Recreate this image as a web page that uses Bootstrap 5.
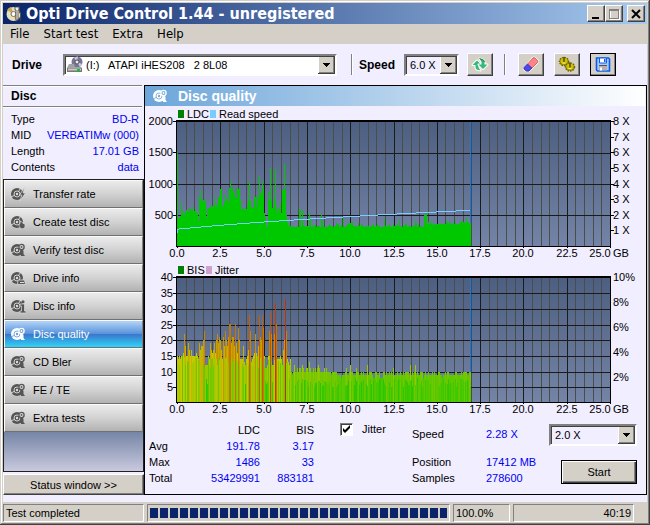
<!DOCTYPE html>
<html lang="en">
<head>
<meta charset="utf-8">
<meta name="viewport" content="width=device-width, initial-scale=1">
<title>Opti Drive Control 1.44 - unregistered</title>
<link href="https://cdn.jsdelivr.net/npm/bootstrap@5.3.0/dist/css/bootstrap.min.css" rel="stylesheet">
<style>
:root{--face:#d4d0c8;--pane:#f0eeff;--blue:#0000f0}
body{font:11px/16px "Liberation Sans",Arial,sans-serif;color:#000;background:var(--face)}
.app{min-height:100vh;padding:3px;background:var(--face);box-shadow:inset -1px -1px #404040,inset 1px 1px #d4d0c8,inset -2px -2px #808080,inset 2px 2px #fff}
.tahoma{font-family:"DejaVu Sans Condensed","Noto Sans",sans-serif}
.titlebar{height:21px;padding:0 2px 0 3px;background:linear-gradient(90deg,#0a246a,#a6caf0);color:#fff}
.titlebar h1{font-size:16px;line-height:21px;font-weight:700;margin:0 auto 0 4px;white-space:nowrap}
.bevel{background:var(--face);border:1px solid;border-color:#fff #404040 #404040 #fff;box-shadow:inset -1px -1px #808080;color:#000;padding:0;border-radius:0}
.capbtn{width:18px;height:17px;display:flex}
.capbtn svg{margin:auto}
.menu{height:20px;padding-left:7px;gap:14px;font-size:13px;line-height:19px}
.menu a{color:#000;text-decoration:none}
.client{background:var(--pane)}
.tools{height:41px;padding:0 31px 0 9px}
.tools label{font-weight:700;font-size:12px}
.drive-label{width:51px}
.pick{appearance:none;border:2px solid;border-color:#808080 #fff #fff #808080;box-shadow:inset 1px 1px #404040;height:22px;padding:0 20px 0 4px;border-radius:0;font-size:11px;color:#000;
background:#fff url("data:image/svg+xml,%3Csvg xmlns='http://www.w3.org/2000/svg' width='17' height='18' shape-rendering='crispEdges'%3E%3Cpath fill='%23404040' d='M0 0h17v18H0z'/%3E%3Cpath fill='%23fff' d='M0 0h16v17H0z'/%3E%3Cpath fill='%23808080' d='M1 1h15v16H1z'/%3E%3Cpath fill='%23d4d0c8' d='M1 1h14v15H1z'/%3E%3Cpath d='M5 7h7v1H5zM6 8h5v1H6zM7 9h3v1H7zM8 10h1v1H8z'/%3E%3C/svg%3E") no-repeat right 0 top 0}
.pick.tinted{background-color:var(--pane)}
.pick.drive{padding-left:21px}
.drive-icon{position:absolute;left:3px;top:2px;pointer-events:none}
.vsep{width:2px;height:21px;background:linear-gradient(90deg,#808080 50%,#fff 50%)}
.sep-speed{margin:0 6px 0 14px}
.sep-tools{margin:0 12px 0 11px}
.speed-pick{width:55px;margin-left:9px}
.toolbtn{width:26px;height:23px;display:flex}
.toolbtn svg{margin:auto}
.toolbtn.active-tool{outline:1px solid #000;outline-offset:-1px}
.btn-gap{margin-left:10px}
.sidebar{width:141px;flex:none}
.disc-title{font-size:12px;line-height:20px;font-weight:700;margin:0 2px 0 0;padding-left:8px;border-top:1px solid #808080;border-bottom:1px solid #808080;box-shadow:0 1px #fff,inset 0 1px #fff}
.disc-facts{margin:0;padding:4px 5px 4px 8px;height:72px}
.disc-facts dt,.live dt{font-weight:400}
.disc-facts dd{color:var(--blue);margin:0}
.blue{color:var(--blue)}
.nav-stack{border:1px solid #202020;background:linear-gradient(#6f80a2,#c9c9de) bottom/100% 42px no-repeat}
.task{height:28px;display:flex;align-items:center;border:1px solid;border-color:#fafafa #808080 #707070 #fff;background:linear-gradient(#ebebeb,#d2d2d2 50%,#b2b2b2);color:#000;padding:0 0 0 5px;gap:7px;text-align:left;width:100%;--cut:#dcdcdc}
.task svg{color:#565656;flex:none}
.task.on{background:linear-gradient(#b4d4f6,#5a94dc 48%,#3a78cc 52%,#30d4f8);color:#fff;--cut:#6ca0e0}
.task.on svg{color:#fff}
.status-btn{height:21px;margin-top:2px}
.mainpane{border:1px solid #000;min-width:0;min-height:410px}
.pane-head{height:20px;margin-right:1px;padding-left:7px;background:linear-gradient(90deg,#6ca5da,#fff);color:#fff;--cut:#78acdc}
.pane-head h2{font-size:14px;line-height:20px;font-weight:700;margin:0 0 0 10px}
.chart{display:block;width:100%;height:auto;font-size:11px}
.figures{padding:3px 9px 0 4px}
.scores{margin-top:1px}
.scores th{font-weight:400}
.scores th,.scores td{padding:0}
.scores .rowhead{width:36px}
.scores .ldc{width:75px}
.scores .bis{width:54px}
.tick{appearance:none;width:13px;height:13px;margin:0;border:1px solid;border-color:#808080 #fff #fff #808080;box-shadow:inset 1px 1px #404040;background:#fff}
.tick:checked{background:#fff url("data:image/svg+xml,%3Csvg xmlns='http://www.w3.org/2000/svg' width='11' height='11'%3E%3Cpath d='M2 4v3l2 2 5-5V1L4 6z'/%3E%3C/svg%3E")}
.jit{margin-left:26px;gap:9px}
.live dt{width:74px}
.live dd{margin:0;width:56px;white-space:nowrap;color:var(--blue)}
.live-first{margin:5px 0 12px}
.go{width:88px;margin:3px 0 0 7px;gap:14px}
.startbtn{width:76px;height:24px;border-color:#000;box-shadow:inset 1px 1px #fff,inset -1px -1px #404040,inset -2px -2px #808080}
.foot-gap{height:7px}
.statusbar{height:20px;gap:3px;padding-right:13px}
.well{height:18px;line-height:16px;border:1px solid;border-color:#808080 #fff #fff #808080;padding:0 2px}
.well-msg{width:141px}
.well-pct{width:57px}
.well-time{width:121px}
.blocks{height:18px;padding:3px 2px;border:1px solid;border-color:#808080 #fff #fff #808080;background:none;border-radius:0;min-width:0}
.blocks .progress-bar{background:repeating-linear-gradient(90deg,#0a246a 0 8px,transparent 8px 10px)}
</style>
</head>
<body>
<svg class="d-none">
  <symbol id="disc" viewBox="0 0 16 16"><circle cx="7" cy="8" r="6" fill="currentColor"/><path d="M7 8L1 11M7 8L11 1.500" stroke="var(--cut)" stroke-width=".9"/><circle cx="7" cy="8" r="3" fill="currentColor" stroke="var(--cut)" stroke-width=".9"/><circle cx="7" cy="8" r="1.200" fill="var(--cut)"/></symbol>
  <symbol id="b-bolt" viewBox="0 0 16 16"><path fill="currentColor" stroke="var(--cut)" stroke-width=".8" d="M14.500 1.500L9.500 9h2.300L10 15l5.500-8h-2.300z"/></symbol>
  <symbol id="b-burn" viewBox="0 0 16 16"><path fill="currentColor" stroke="var(--cut)" stroke-width=".7" d="M10 7c2 1 3 1.500 3.500 3l.8-.8c1.500 2.500.7 5.500-1.800 5.500S8.300 12.500 9.500 10c.6-1 1-1.500.5-3z"/></symbol>
  <symbol id="b-lens" viewBox="0 0 16 16"><circle cx="11.500" cy="5" r="2.600" fill="var(--cut)" stroke="currentColor" stroke-width="1.300"/><circle cx="11.500" cy="5" r=".9" fill="currentColor"/><path fill="currentColor" d="M10 8.500h3.500V12l1.500 2h-4z"/></symbol>
  <symbol id="b-drive" viewBox="0 0 16 16"><path fill="currentColor" stroke="var(--cut)" stroke-width=".8" d="M8 10h6.500l1 4.500H7.500z"/><path stroke="var(--cut)" d="M10 12.500h4"/></symbol>
  <symbol id="b-info" viewBox="0 0 16 16"><path fill="currentColor" stroke="var(--cut)" stroke-width=".7" d="M10 6h4.500v7H16v2h-6v-2h1.500V8H10z"/><circle cx="13" cy="3.700" r="1.500" fill="currentColor"/></symbol>
</svg>
<div class="app d-flex flex-column">
  <header class="titlebar d-flex align-items-center">
    <svg width="16" height="17" viewBox="0 0 16 17"><circle cx="7.500" cy="9" r="7" fill="#e8dfc0"/><path d="M7.500 9L1 5a7 7 0 0 1 4-3zM7.500 9l6 4a7 7 0 0 1-4 3z" fill="#c6a94d"/><circle cx="7.500" cy="9" r="2.500" fill="#fff" stroke="#77705c"/><path d="M9 2h4v3h-1v10h-2V5H9zM13.500 1v7h1V16" fill="#eee" stroke="#444" stroke-width=".8"/></svg>
    <h1 class="tahoma">Opti Drive Control 1.44 - unregistered</h1>
    <button class="bevel capbtn" aria-label="Minimize"><svg width="12" height="12" shape-rendering="crispEdges"><path d="M2 9h7v2H2z"/></svg></button>
    <button class="bevel capbtn" aria-label="Maximize" disabled><svg width="12" height="12" shape-rendering="crispEdges"><path d="M2.500 2.500h9v9h-9z" fill="none" stroke="#fff"/><path d="M1.500 1.500h9v9h-9zM1 2.500h9" fill="none" stroke="#808080"/></svg></button>
    <button class="bevel capbtn ms-1" aria-label="Close"><svg width="12" height="12"><path d="M2 2l8 8M10 2l-8 8" stroke="#000" stroke-width="2"/></svg></button>
  </header>
  <nav class="menu tahoma d-flex"><a href="#">File</a><a href="#">Start test</a><a href="#">Extra</a><a href="#">Help</a></nav>
  <div class="client flex-grow-1">
    <div class="tools d-flex align-items-center">
      <label class="drive-label" for="drive">Drive</label>
      <div class="position-relative flex-grow-1">
        <select id="drive" class="pick drive w-100 d-block"><option>(I:) &nbsp; ATAPI iHES208 &nbsp; 2 8L08</option></select>
        <svg class="drive-icon" width="17" height="17" viewBox="0 0 17 17"><circle cx="11" cy="6" r="5.500" fill="#77739b"/><path d="M11 6L8 1.500l4-1zM11 6l5 2-2 3z" fill="#c9c5e4"/><circle cx="11" cy="6" r="2" fill="#eee" stroke="#555"/><path d="M3 8h5l1 3h6l1 1v4H1v-4z" fill="#a2a2a2"/><path d="M1 12h15v4H1z" fill="#777"/><path d="M2 12.500h13v2H2z" fill="#c8c8c8"/><path d="M11 13h3v2h-3z" fill="#0c3"/></svg>
      </div>
      <span class="vsep sep-speed"></span>
      <label for="spd">Speed</label>
      <select id="spd" class="pick tinted speed-pick"><option>6.0 X</option></select>
      <button class="bevel toolbtn ms-2" aria-label="Refresh"><svg width="18" height="16" viewBox="0 0 18 16"><g stroke="#fff" stroke-width="2" stroke-linejoin="round" fill="#35b878" paint-order="stroke"><path d="M6 3.500L10.500 8H7.500v2.500l2 3L5.500 12.500 4.500 10.500V8H1.500z"/><path d="M12 12L7.500 7.500h3V5L8.500 1.500 12.500 3 13.500 5v2.500h3z"/></g><path d="M8.500 1.500L12.500 3 13.500 5" fill="none" stroke="#1d7a50"/></svg></button>
      <span class="vsep sep-tools"></span>
      <button class="bevel toolbtn" aria-label="Erase"><svg width="18" height="17" viewBox="0 0 18 17"><path d="M2.500 12L11 2q1-1 2 0l2.500 2.500q1 1 0 2L7 15H4.500L2 13z" fill="#f88" stroke="#fff" stroke-width="2"/><path d="M2.500 11.500L11 2q1-1 2 0l2.500 2.500q1 1 0 2L7 15H4.500L2 13z" fill="#ff8585" stroke="#c24a4a" stroke-width=".8"/><path d="M5.500 8l4.500 4-3 3H4.500L2 13v-1.500z" fill="#4a4aee" stroke="#3434b4" stroke-width=".8"/></svg></button>
      <button class="bevel toolbtn btn-gap" aria-label="Options"><svg width="18" height="17" viewBox="0 0 18 17"><g fill="#a89a00" stroke="#6e6300" stroke-width="1.500" stroke-dasharray="1.500 1"><ellipse cx="6" cy="5.500" rx="4.500" ry="4"/><ellipse cx="12" cy="11" rx="4.500" ry="4"/></g><g fill="#cfc000"><ellipse cx="6" cy="5" rx="3.500" ry="3"/><ellipse cx="12" cy="10.500" rx="3.500" ry="3"/></g><path d="M6 1v5M12 6.500v5" stroke="#554c00" stroke-width="1.500"/><path d="M4.500 7h3M10.500 12.500h3" stroke="#f4ee9a"/></svg></button>
      <button class="bevel toolbtn active-tool btn-gap" aria-label="Save"><svg width="16" height="15" viewBox="0 0 16 15"><path d="M1.500 1h12l1 1v12h-12l-1-1z" fill="#a9c8f8" stroke="#0b5cf0" stroke-width="1.600"/><path d="M4.500 1h7v5h-7z" fill="#fff" stroke="#0b5cf0"/><path d="M9 2h1.500v3H9z" fill="#0b5cf0"/><path d="M4 9h8v4.500H4z" fill="#b0b0b0"/><path d="M4 8.500h8" stroke="#555"/><path d="M5 10.500h2v3H5z" fill="#fff"/></svg></button>
    </div>
    <div class="d-flex">
      <aside class="sidebar d-flex flex-column">
        <h2 class="disc-title">Disc</h2>
        <dl class="disc-facts">
          <div class="d-flex justify-content-between"><dt>Type</dt><dd>BD-R</dd></div>
          <div class="d-flex justify-content-between"><dt>MID</dt><dd>VERBATIMw (000)</dd></div>
          <div class="d-flex justify-content-between"><dt>Length</dt><dd>17.01 GB</dd></div>
          <div class="d-flex justify-content-between"><dt>Contents</dt><dd>data</dd></div>
        </dl>
        <div class="nav-stack flex-grow-1">
          <button class="task"><svg width="16" height="16"><use href="#disc"/><use href="#b-bolt"/></svg>Transfer rate</button>
          <button class="task"><svg width="16" height="16"><use href="#disc"/><use href="#b-burn"/></svg>Create test disc</button>
          <button class="task"><svg width="16" height="16"><use href="#disc"/><use href="#b-lens"/></svg>Verify test disc</button>
          <button class="task"><svg width="16" height="16"><use href="#disc"/><use href="#b-drive"/></svg>Drive info</button>
          <button class="task"><svg width="16" height="16"><use href="#disc"/><use href="#b-info"/></svg>Disc info</button>
          <button class="task on"><svg width="16" height="16"><use href="#disc"/><use href="#b-lens"/></svg>Disc quality</button>
          <button class="task"><svg width="16" height="16"><use href="#disc"/><use href="#b-lens"/></svg>CD Bler</button>
          <button class="task"><svg width="16" height="16"><use href="#disc"/><use href="#b-lens"/></svg>FE / TE</button>
          <button class="task"><svg width="16" height="16"><use href="#disc"/><use href="#b-lens"/></svg>Extra tests</button>
        </div>
        <button class="bevel status-btn">Status window &gt;&gt;</button>
      </aside>
      <main class="mainpane flex-grow-1">
        <div class="pane-head d-flex align-items-center"><svg width="16" height="16"><use href="#disc"/><use href="#b-lens"/></svg><h2>Disc quality</h2></div>
        <svg id="ldc" class="chart" viewBox="145 106 501 156" role="img" aria-label="LDC and read speed"></svg>
        <svg id="bis" class="chart" viewBox="145 262 501 156" role="img" aria-label="BIS and jitter"></svg>
        <div class="figures d-flex align-items-start">
          <table class="scores">
            <tr><th class="rowhead"></th><th class="ldc text-end">LDC</th><th class="bis text-end">BIS</th></tr>
            <tr><th>Avg</th><td class="blue text-end">191.78</td><td class="blue text-end">3.17</td></tr>
            <tr><th>Max</th><td class="blue text-end">1486</td><td class="blue text-end">33</td></tr>
            <tr><th>Total</th><td class="blue text-end">53429991</td><td class="blue text-end">883181</td></tr>
          </table>
          <div class="jit d-flex align-items-center"><input id="jitter" class="tick" type="checkbox" checked><label for="jitter">Jitter</label></div>
          <dl class="live mb-0 ms-auto">
            <div class="d-flex live-first"><dt>Speed</dt><dd>2.28 X</dd></div>
            <div class="d-flex"><dt>Position</dt><dd>17412 MB</dd></div>
            <div class="d-flex"><dt>Samples</dt><dd>278600</dd></div>
          </dl>
          <div class="go d-flex flex-column align-items-end">
            <select id="rate" class="pick tinted w-100" aria-label="Test speed"><option>2.0 X</option></select>
            <button class="bevel startbtn">Start</button>
          </div>
        </div>
      </main>
    </div>
    <div class="foot-gap"></div>
  </div>
  <footer class="statusbar d-flex align-items-end">
    <div class="well well-msg">Test completed</div>
    <div class="progress blocks flex-grow-1" role="progressbar" aria-label="Test progress" aria-valuenow="100" aria-valuemin="0" aria-valuemax="100"><div class="progress-bar w-100"></div></div>
    <div class="well well-pct">100.0%</div>
    <div class="well well-time text-end">40:19</div>
  </footer>
</div>
<script src="https://cdn.jsdelivr.net/npm/bootstrap@5.3.0/dist/js/bootstrap.bundle.min.js"></script>
<script>
const X0 = 177, GB = 17.32;
let seed = 7;
const rnd = () => (seed = (seed * 16807) % 2147483647) / 2147483647;
const rect = (x, y, w, h, f) => `<rect x="${x}" y="${y}" width="${w}" height="${h}" fill="${f}"/>`;
const text = (x, y, s, a) => `<text x="${x}" y="${y}" text-anchor="${a}">${s}</text>`;

function plot(id, top, bottom, lines, data, extra, labels) {
  let s = `<defs><linearGradient id="${id}bg" x1="0" y1="0" x2="0" y2="1"><stop stop-color="#4d5f80"/><stop offset="1" stop-color="#7384a6"/></linearGradient></defs><g shape-rendering="crispEdges">`;
  s += rect(X0, top, 433, bottom - top, `url(#${id}bg)`);
  for (let i = 1; i < 50; i++) s += rect(Math.round(X0 + i * GB / 2), top, 1, bottom - top, i % 5 ? '#4c4c4c' : '#1b1b1b');
  for (const y of lines) s += rect(X0, y, 433, 1, '#1b1b1b');
  s += rect(470, top, 1, bottom - top, '#1078e8') + data + extra;
  s += rect(X0 - 1, top - 1, 435, 2, '#000') + rect(X0 - 1, top - 1, 1, bottom - top + 2, '#000') + rect(610, top - 1, 1, bottom - top + 2, '#000') + rect(X0 - 1, bottom, 435, 1, '#000');
  for (let i = 0; i <= 10; i++) s += rect(Math.round(X0 + i * GB * 2.5), bottom, 1, 2, '#000');
  s += '</g>';
  for (let i = 0; i <= 10; i++) s += text(Math.round(X0 + i * 43.3) - (i == 10 ? 10 : 0), bottom + 11, (i * 2.5).toFixed(1), 'middle');
  s += text(613, bottom + 11, 'GB', 'start');
  document.getElementById(id).innerHTML = s + labels;
}

// LDC: column tops for the first 6.5 GB, thirds of a pixel below y=85
const head = [205,400,400,392,358,375,390,390,380,376,378,380,370,372,376,366,380,378,372,380,388,408,335,315,345,350,345,350,342,400,372,370,370,362,366,364,366,335,360,366,358,332,340,312,312,360,366,328,350,340,345,353,310,288,312,318,308,338,325,340,308,312,310,345,372,370,376,370,376,372,360,345,292,345,365,368,366,335,335,365,333,340,274,325,328,288,312,385,400,420,425,345,322,250,345,370,370,345,252,365,385,372,372,355,385,316,316,238,316,390,412,422];
const spikes = {122:372,123:374,125:376,132:384,133:400,144:388,145:405,166:400,175:410,207:402,222:406,238:408,247:390,248:390,249:380,278:408,289:400};
const ramp = [[0,434],[2,431],[13,428],[24,425],[35,422],[47,419],[60,416],[73,413],[87,410],[102,407],[117,404],[133,401],[149,398],[166,395],[183,392],[201,389],[220,386],[239,382],[259,379],[279,376],[293,376]];
let ldc = '';
for (let i = 0; i < 294; i++) {
  const base = i < 250 ? 422 : i < 283 ? 414 : 409;
  let v = i < head.length ? head[i] : base + Math.round(rnd() * 5) - (rnd() > .85 ? 8 : 0);
  if (i >= head.length && spikes[i]) v = spikes[i];
  const y = Math.round(85 + v / 3);
  ldc += rect(X0 + i, y, 1, 246 - y, '#00c800');
}
let speed = rect(X0, 229, 1, 4, '#78ccff');
for (let k = 0; k < ramp.length - 1; k++) speed += rect(X0 + ramp[k][0], Math.round(84.500 + ramp[k][1] / 3), ramp[k + 1][0] - ramp[k][0], 1, '#78ccff');
let l1 = '';
[2000,1500,1000,500].forEach((n, i) => { const y = Math.round(121 + i * 31.3); l1 += text(173, y + 4, n, 'end') + rect(173, y, 4, 1, '#000'); });
for (let n = 1; n <= 8; n++) { const y = Math.round(246 - n * 15.6); l1 += text(613, y + 4, n + ' X', 'start') + rect(610, y, 4, 1, '#000'); }
l1 += rect(178, 110, 6, 8, '#008000') + text(187, 118, 'LDC', 'start') + rect(210, 110, 6, 8, '#78ccff') + text(219, 118, 'Read speed', 'start');
plot('ldc', 121, 246, [153, 184, 215], ldc, speed, l1);

// BIS: peak value of each column for the first 6.7 GB
const peaks = [15,14,15,14,15,15,16,22,18,15,15,19,17,15,17,15,15,15,15,16,15,14,19,17,18,18,20,23,12,12,12,15,14,19,17,16,17,19,16,20,22,19,21,20,17,14,21,18,23,20,18,21,25,25,19,21,21,18,25,19,16,24,20,14,14,14,18,13,12,14,15,17,28,23,13,14,15,16,22,16,15,18,28,21,20,28,24,15,11,11,12,15,23,29,22,12,12,22,32,25,14,14,14,15,14,12,17,20,33,23,14,13,12,14,10,9,10,12,10,10];
const shade = v => v <= 15 ? [Math.min(200, Math.max(0, (v - 4) * 19)), 200] : [200, Math.max(40, 200 - (v - 15) * 8.5)];
const tint = v => { const [r, g] = shade(v); return `rgb(${Math.round(r)},${Math.round(g)},0)`; };
const extra = {123:11,125:12,132:13,138:11,141:12,142:11,169:11,173:12,179:11,190:12,206:10,216:11,233:12,238:12,257:10,270:10,278:10,289:10};
let bis = '';
for (let i = 0; i < 294; i++) {
  let v = i < peaks.length ? peaks[i] : extra[i] || Math.round((i < 150 ? 9.6 : 8.4) + rnd() * 1.8);
  const h = Math.round(v * 3.14);
  bis += rect(X0 + i, 403 - h, 1, h, tint(v > 16 ? v : Math.min(v, 14.5)));
  if (v < 24 && rnd() > .25) {
    const w = v > 12 ? 11 + rnd() * 4 : 5 + rnd() * 3, c = v > 12 ? 9 + rnd() * 5 : 6 + rnd() * 3, k = Math.min(h, Math.round(w * 3.14));
    bis += rect(X0 + i, 403 - k, 1, k, tint(c));
  }
}
let l2 = '';
const rows = [];
for (let n = 5; n <= 40; n += 5) { const y = Math.round(403 - n * 3.14); if (n < 40) rows.push(y); l2 += text(173, y + 4, n, 'end') + rect(173, y, 4, 1, '#000'); }
for (let n = 2; n <= 10; n += 2) l2 += text(613, Math.round(403 - n * 12.5) + 3, n + '%', 'start');
l2 += rect(178, 266, 6, 8, '#008000') + text(187, 274, 'BIS', 'start') + rect(206, 266, 6, 8, '#d0a0d0') + text(215, 274, 'Jitter', 'start');
plot('bis', 277, 402, rows, bis, '', l2);
</script>
</body>
</html>
